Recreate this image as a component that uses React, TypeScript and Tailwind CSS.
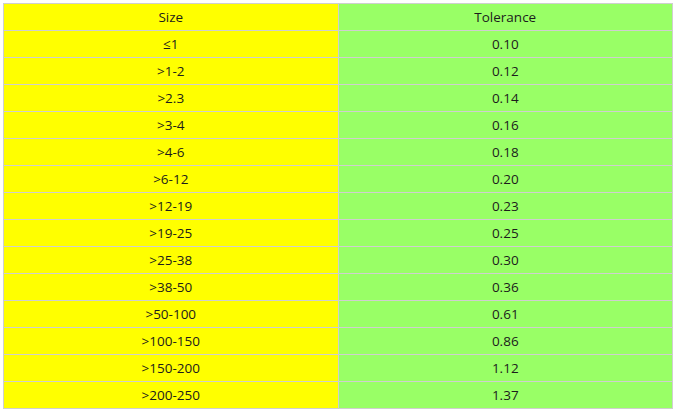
import React from "react";

const rows: [string, string][] = [
  ["≤1", "0.10"],
  [">1-2", "0.12"],
  [">2.3", "0.14"],
  [">3-4", "0.16"],
  [">4-6", "0.18"],
  [">6-12", "0.20"],
  [">12-19", "0.23"],
  [">19-25", "0.25"],
  [">25-38", "0.30"],
  [">38-50", "0.36"],
  [">50-100", "0.61"],
  [">100-150", "0.86"],
  [">150-200", "1.12"],
  [">200-250", "1.37"],
];

const App = () => {
  return (
    <div className="bg-white pl-[3px] pt-[3px] font-['Open_Sans',sans-serif] text-[13.5px] text-[#1c1c1c]">
      <table className="w-[670px] table-fixed border-collapse border border-[#cfcfcf]">
        <thead>
          <tr>
            <th className="h-[27px] border border-[#cfcfcf] bg-[#ffff00] p-0 pt-[1px] text-center font-normal">Size</th>
            <th className="h-[27px] border border-[#cfcfcf] bg-[#99ff66] p-0 pt-[1px] text-center font-normal">Tolerance</th>
          </tr>
        </thead>
        <tbody>
          {rows.map(([size, tol]) => (
            <tr key={size}>
              <td className="h-[27px] border border-[#cfcfcf] bg-[#ffff00] p-0 pt-[1px] text-center">{size}</td>
              <td className="h-[27px] border border-[#cfcfcf] bg-[#99ff66] p-0 pt-[1px] text-center">{tol}</td>
            </tr>
          ))}
        </tbody>
      </table>
    </div>
  );
};

export default App;
